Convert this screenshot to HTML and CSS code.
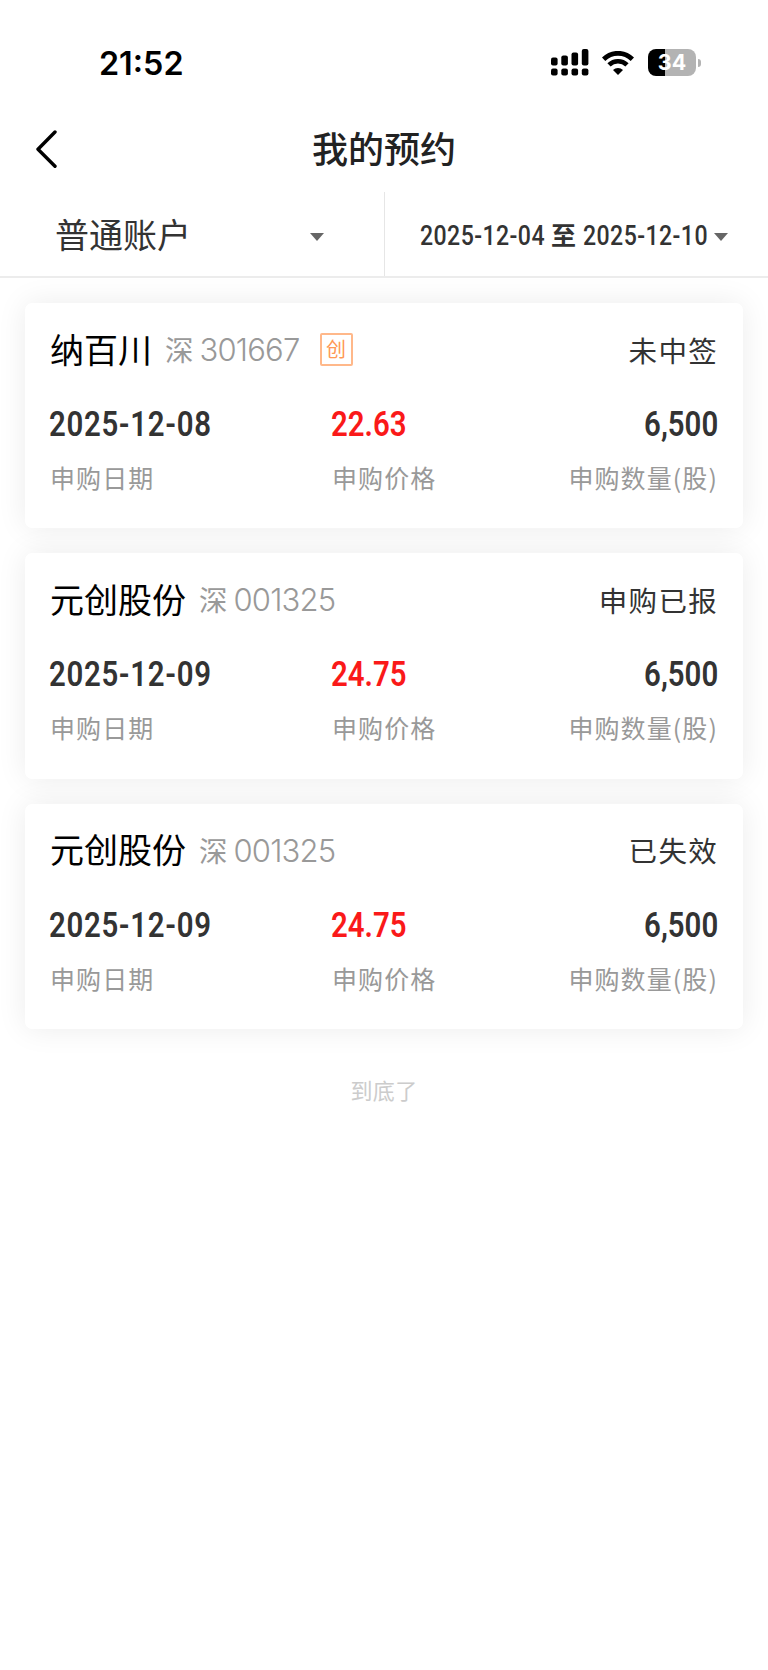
FILE: index.html
```
<!DOCTYPE html>
<html lang="zh-CN">
<head>
    <meta charset="UTF-8">
    <meta name="viewport" content="width=device-width, initial-scale=1.0">
    <title>我的预约</title>
    <link rel="stylesheet" href="styles.css">
</head>
<body>
    <div class="status-bar">
        <span class="time">21:52</span>
        <div class="status-icons">
            <svg class="signal" width="38" height="27" viewBox="0 0 38 27">
                <rect x="0" y="8.5" width="6.6" height="8" rx="2"/>
                <rect x="10.3" y="6.5" width="6.6" height="10" rx="2"/>
                <rect x="20.5" y="3.5" width="6.6" height="13" rx="2"/>
                <rect x="30.8" y="0" width="6.6" height="16.5" rx="2"/>
                <rect x="0" y="19.5" width="6.6" height="7" rx="2"/>
                <rect x="10.3" y="19.5" width="6.6" height="7" rx="2"/>
                <rect x="20.5" y="19.5" width="6.6" height="7" rx="2"/>
                <rect x="30.8" y="19.5" width="6.6" height="7" rx="2"/>
            </svg>
            <svg class="wifi" width="32" height="24" viewBox="0 0 32 24">
                <path d="M1.6 8.2a20.5 20.5 0 0 1 28.8 0" fill="none" stroke="#000" stroke-width="4.8"/>
                <path d="M7 13.9a12.8 12.8 0 0 1 18 0" fill="none" stroke="#000" stroke-width="4.6"/>
                <path d="M16 24l-5-5a7.2 7.2 0 0 1 10 0z"/>
            </svg>
            <div class="battery"><span class="battery-level">34</span></div>
        </div>
    </div>

    <header class="nav">
        <svg class="back" width="22" height="38" viewBox="0 0 22 38">
            <path d="M19 2L2 19.200l17 17" fill="none" stroke="#000" stroke-width="3.4" stroke-linecap="round" stroke-linejoin="round"/>
        </svg>
        <h1>我的预约</h1>
    </header>

    <div class="filters">
        <div class="filter account">
            <span>普通账户</span>
            <i class="arrow"></i>
        </div>
        <div class="filter dates">
            <span class="date">2025-12-04</span>
            <span class="to">至</span>
            <span class="date">2025-12-10</span>
            <i class="arrow"></i>
        </div>
    </div>

    <main class="list">
        <section class="card">
            <div class="card-head">
                <span class="name">纳百川</span>
                <span class="market">深</span>
                <span class="code">301667</span>
                <span class="tag">创</span>
                <span class="state">未中签</span>
            </div>
            <div class="card-body">
                <div class="item day"><b>2025-12-08</b><span>申购日期</span></div>
                <div class="item price"><b>22.63</b><span>申购价格</span></div>
                <div class="item amount"><b>6,500</b><span>申购数量(股)</span></div>
            </div>
        </section>

        <section class="card">
            <div class="card-head">
                <span class="name">元创股份</span>
                <span class="market">深</span>
                <span class="code">001325</span>
                <span class="state">申购已报</span>
            </div>
            <div class="card-body">
                <div class="item day"><b>2025-12-09</b><span>申购日期</span></div>
                <div class="item price"><b>24.75</b><span>申购价格</span></div>
                <div class="item amount"><b>6,500</b><span>申购数量(股)</span></div>
            </div>
        </section>

        <section class="card">
            <div class="card-head">
                <span class="name">元创股份</span>
                <span class="market">深</span>
                <span class="code">001325</span>
                <span class="state">已失效</span>
            </div>
            <div class="card-body">
                <div class="item day"><b>2025-12-09</b><span>申购日期</span></div>
                <div class="item price"><b>24.75</b><span>申购价格</span></div>
                <div class="item amount"><b>6,500</b><span>申购数量(股)</span></div>
            </div>
        </section>
    </main>

    <p class="end">到底了</p>
</body>
</html>
```
FILE: styles.css
```
* {
    margin: 0;
    padding: 0;
    box-sizing: border-box;
}

body {
    background: #fff;
    color: #333;
    font-family: "Noto Sans CJK SC", sans-serif;
    min-height: 100vh;
}

.status-bar {
    height: 105px;
    padding: 20px 72px 0 99px;
    display: flex;
    align-items: center;
    justify-content: space-between;
}

.time {
    padding-top: 2px;
    color: #000;
    font-family: Inter, sans-serif;
    font-size: 32.3px;
    font-weight: 600;
    line-height: 40px;
}

.status-icons {
    display: flex;
    align-items: center;
}

.wifi {
    margin: 0 14px 0 13px;
}

.battery {
    width: 48px;
    height: 27px;
    border-radius: 8px;
    background: linear-gradient(90deg, #000 35%, #b3b3b3 35%);
    position: relative;
    display: flex;
    align-items: center;
    justify-content: center;
}

.battery::after {
    content: '';
    position: absolute;
    left: 49.5px;
    top: 9.5px;
    width: 3px;
    height: 8px;
    border-radius: 0 4px 4px 0;
    background: #b3b3b3;
}

.battery-level {
    color: #fff;
    font-family: Inter, sans-serif;
    font-size: 21.5px;
    font-weight: 700;
    line-height: 27px;
}

.nav {
    height: 87px;
    padding: 0 36px;
    display: grid;
    grid-template-columns: 22px 1fr 22px;
    align-items: center;
}

.nav h1 {
    padding-bottom: 3px;
    color: #222;
    font-size: 36px;
    font-weight: 500;
    line-height: 45px;
    text-align: center;
}

.back {
    margin-top: 1px;
}

.filters {
    height: 86px;
    display: flex;
    border-bottom: 2px solid #ececec;
}

.filter {
    width: 50%;
    display: flex;
    align-items: center;
    white-space: nowrap;
}

.account {
    padding: 0 60px 0 55px;
    justify-content: space-between;
    font-size: 34px;
}

.account span {
    padding-bottom: 1px;
}

.dates {
    padding: 0 40px 0 35px;
    border-left: 1px solid #e6e6e6;
    justify-content: space-between;
}

/* Condensed digits for dates and amounts */
.date,
.item b {
    font-family: Roboto, sans-serif;
    transform: scaleX(0.84);
    transform-origin: left;
}

.date {
    width: 124px;
    padding-top: 3px;
    font-size: 27.5px;
    font-weight: 500;
    letter-spacing: 0.5px;
}

.to {
    font-size: 25px;
    font-weight: 700;
}

.arrow {
    margin-top: 5px;
    border: 7px solid transparent;
    border-top: 8px solid #666;
    border-bottom: 0;
}

.list {
    padding: 25px 25px 0;
    display: flex;
    flex-direction: column;
    gap: 25px;
}

.card {
    height: 225.4px;
    padding: 24px 25px 0;
    border-radius: 7px;
    background: #fff;
    box-shadow: 0 0 30px rgba(0, 0, 0, 0.08);
}

.card-head {
    height: 46px;
    display: flex;
    align-items: center;
    line-height: 46px;
}

.name {
    padding-bottom: 3px;
    color: #000;
    font-size: 34px;
}

.market {
    margin-left: 13px;
    padding-bottom: 2px;
    color: #999;
    font-size: 28.5px;
}

.code {
    width: 102px;
    margin-left: 6px;
    color: #999;
    font-family: Inter, sans-serif;
    font-size: 31px;
    font-weight: 300;
    letter-spacing: -0.8px;
}

.tag {
    width: 33px;
    height: 33px;
    margin: -2px 0 0 18px;
    border: 2px solid #ffb88a;
    border-radius: 2px;
    color: #ff9955;
    font-size: 20px;
    line-height: 28px;
    text-align: center;
}

.state {
    margin-left: auto;
    padding-bottom: 1px;
    font-size: 28.5px;
    letter-spacing: 1.3px;
}

.card-body {
    padding-top: 29px;
    display: grid;
    grid-template-columns: 281px 1fr auto;
}

.item {
    display: flex;
    flex-direction: column;
    align-items: flex-start;
}

.item b {
    font-size: 35px;
    font-weight: 600;
    line-height: 46px;
}

.day b {
    margin-left: -1px;
    letter-spacing: 0.8px;
}

.item span {
    margin-top: 9px;
    color: #999;
    font-size: 25px;
    letter-spacing: 1.1px;
    line-height: 40px;
}

.price b {
    color: #fa1919;
}

.price span {
    margin-left: 1px;
}

.amount {
    align-items: flex-end;
}

.amount b {
    transform-origin: right;
}

.end {
    margin-top: 43px;
    color: #ccc;
    font-size: 22px;
    letter-spacing: 0.4px;
    line-height: 34px;
    text-align: center;
}
```
